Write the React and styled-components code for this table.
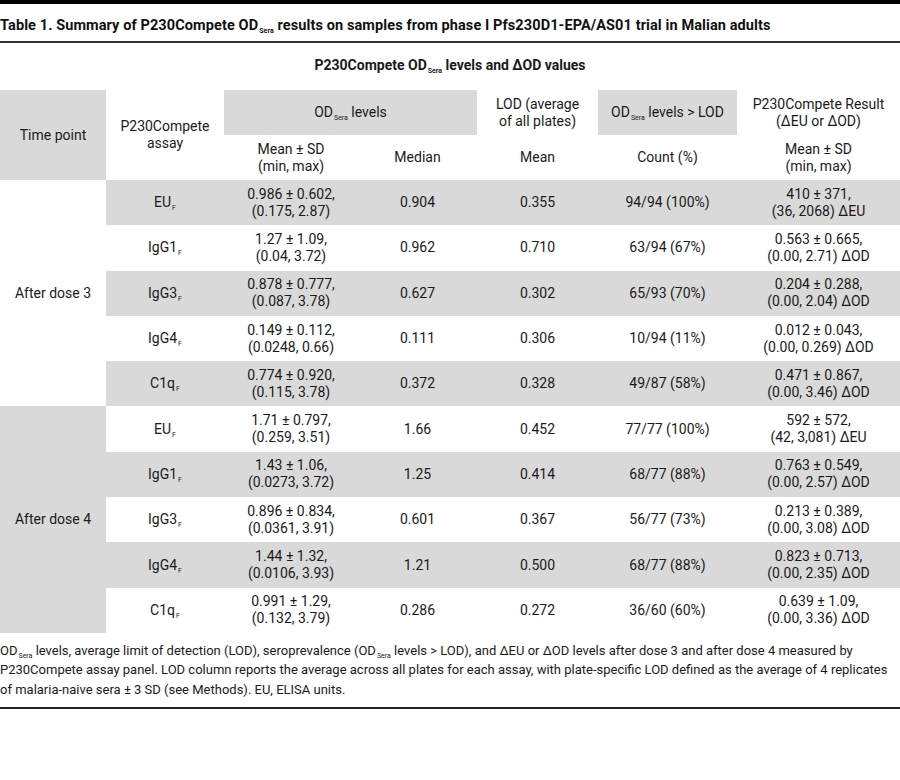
import styled, { createGlobalStyle } from "styled-components";

const GlobalStyle = createGlobalStyle`
  body {
    margin: 0;
    background: #ffffff;
    font-family: Roboto, "Liberation Sans", sans-serif;
    color: #1a1a1a;
  }
`;

const Page = styled.div`
  width: 900px;
  border-top: 4px solid #000000;
`;

const Title = styled.h1`
  margin: 0;
  padding: 13px 0 7px;
  font-size: 14.5px;
  letter-spacing: 0.1px;
  line-height: 17px;
  font-weight: 700;
  color: #111111;
  white-space: nowrap;
  border-bottom: 2px solid #333333;
`;

const Table = styled.table`
  width: 900px;
  table-layout: fixed;
  border-collapse: collapse;
  border-spacing: 0;
  font-size: 14px;
  line-height: 17px;
`;

const GroupHead = styled.th`
  padding: 14px 0 16px;
  font-weight: 700;
  text-align: center;
`;

const Th = styled.th`
  height: 45px;
  padding: 0 4px;
  font-weight: 400;
  text-align: center;
  vertical-align: middle;
  background: ${(p) => (p.$shaded ? "#d9d9d9" : "transparent")};
`;

const Row = styled.tr`
  height: 45.3px;
  background: ${(p) => (p.$shaded ? "#d9d9d9" : "transparent")};
`;

const Td = styled.td`
  padding: 0 4px;
  text-align: center;
  vertical-align: middle;
`;

const TimeCell = styled.td`
  padding: 0 4px;
  text-align: center;
  vertical-align: middle;
  background: ${(p) => (p.$shaded ? "#d9d9d9" : "#ffffff")};
`;

const Sub = styled.sub`
  font-size: 7px;
  line-height: 0;
  vertical-align: -3px;
  margin-left: 1px;
`;

const Footnote = styled.p`
  margin: 0;
  padding: 8px 0 8px;
  font-size: 13px;
  line-height: 19.5px;
  white-space: nowrap;
  border-bottom: 2px solid #222222;
`;

const OD = () => (
  <>
    OD<Sub>Sera</Sub>
  </>
);

const groups = [
  {
    label: "After dose 3",
    shaded: false,
    rows: [
      ["EU", "0.986 ± 0.602,", "(0.175, 2.87)", "0.904", "0.355", "94/94 (100%)", "410 ± 371,", "(36, 2068) ∆EU"],
      ["IgG1", "1.27 ± 1.09,", "(0.04, 3.72)", "0.962", "0.710", "63/94 (67%)", "0.563 ± 0.665,", "(0.00, 2.71) ∆OD"],
      ["IgG3", "0.878 ± 0.777,", "(0.087, 3.78)", "0.627", "0.302", "65/93 (70%)", "0.204 ± 0.288,", "(0.00, 2.04) ∆OD"],
      ["IgG4", "0.149 ± 0.112,", "(0.0248, 0.66)", "0.111", "0.306", "10/94 (11%)", "0.012 ± 0.043,", "(0.00, 0.269) ∆OD"],
      ["C1q", "0.774 ± 0.920,", "(0.115, 3.78)", "0.372", "0.328", "49/87 (58%)", "0.471 ± 0.867,", "(0.00, 3.46) ∆OD"],
    ],
  },
  {
    label: "After dose 4",
    shaded: true,
    rows: [
      ["EU", "1.71 ± 0.797,", "(0.259, 3.51)", "1.66", "0.452", "77/77 (100%)", "592 ± 572,", "(42, 3,081) ∆EU"],
      ["IgG1", "1.43 ± 1.06,", "(0.0273, 3.72)", "1.25", "0.414", "68/77 (88%)", "0.763 ± 0.549,", "(0.00, 2.57) ∆OD"],
      ["IgG3", "0.896 ± 0.834,", "(0.0361, 3.91)", "0.601", "0.367", "56/77 (73%)", "0.213 ± 0.389,", "(0.00, 3.08) ∆OD"],
      ["IgG4", "1.44 ± 1.32,", "(0.0106, 3.93)", "1.21", "0.500", "68/77 (88%)", "0.823 ± 0.713,", "(0.00, 2.35) ∆OD"],
      ["C1q", "0.991 ± 1.29,", "(0.132, 3.79)", "0.286", "0.272", "36/60 (60%)", "0.639 ± 1.09,", "(0.00, 3.36) ∆OD"],
    ],
  },
];

const colWidths = [106, 118, 134, 119, 121, 139, 163];

const App = () => {
  let index = 0;
  return (
    <Page>
      <GlobalStyle />
      <Title>
        Table 1. Summary of P230Compete <OD /> results on samples from phase I
        Pfs230D1-EPA/AS01 trial in Malian adults
      </Title>
      <Table>
        <colgroup>
          {colWidths.map((w, i) => (
            <col key={i} style={{ width: w }} />
          ))}
        </colgroup>
        <thead>
          <tr>
            <GroupHead colSpan={7}>
              P230Compete <OD /> levels and ∆OD values
            </GroupHead>
          </tr>
          <tr>
            <Th rowSpan={2} $shaded>
              Time point
            </Th>
            <Th rowSpan={2}>
              P230Compete
              <br />
              assay
            </Th>
            <Th colSpan={2} $shaded>
              <OD /> levels
            </Th>
            <Th>
              LOD (average
              <br />
              of all plates)
            </Th>
            <Th $shaded>
              <OD /> levels &gt; LOD
            </Th>
            <Th>
              P230Compete Result
              <br />
              (∆EU or ∆OD)
            </Th>
          </tr>
          <tr>
            <Th>
              Mean ± SD
              <br />
              (min, max)
            </Th>
            <Th>Median</Th>
            <Th>Mean</Th>
            <Th>Count (%)</Th>
            <Th>
              Mean ± SD
              <br />
              (min, max)
            </Th>
          </tr>
        </thead>
        <tbody>
          {groups.map((g) =>
            g.rows.map((r, i) => {
              const shaded = index % 2 === 0;
              index += 1;
              return (
                <Row key={g.label + r[0]} $shaded={shaded}>
                  {i === 0 && (
                    <TimeCell rowSpan={g.rows.length} $shaded={g.shaded}>
                      {g.label}
                    </TimeCell>
                  )}
                  <Td>
                    {r[0]}
                    <Sub>F</Sub>
                  </Td>
                  <Td>
                    {r[1]}
                    <br />
                    {r[2]}
                  </Td>
                  <Td>{r[3]}</Td>
                  <Td>{r[4]}</Td>
                  <Td>{r[5]}</Td>
                  <Td>
                    {r[6]}
                    <br />
                    {r[7]}
                  </Td>
                </Row>
              );
            })
          )}
        </tbody>
      </Table>
      <Footnote>
        <OD /> levels, average limit of detection (LOD), seroprevalence (<OD />{" "}
        levels &gt; LOD), and ∆EU or ∆OD levels after dose 3 and after dose 4
        measured by
        <br />
        P230Compete assay panel. LOD column reports the average across all
        plates for each assay, with plate-specific LOD defined as the average
        of 4 replicates
        <br />
        of malaria-naive sera ± 3 SD (see Methods). EU, ELISA units.
      </Footnote>
    </Page>
  );
};

export default App;
